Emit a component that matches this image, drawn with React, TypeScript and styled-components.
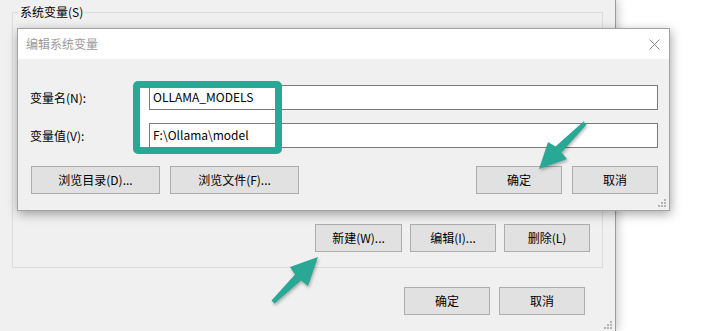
import styled, { createGlobalStyle } from 'styled-components';

const GlobalStyle = createGlobalStyle`
    html, body {
        margin: 0;
        padding: 0;
        background: #ffffff;
    }
    body {
        font-family: "Noto Sans CJK SC", "Noto Sans", sans-serif;
        font-size: 12px;
        color: #000;
    }
`;

const Desktop = styled.div`
    position: relative;
    display: flex;
    width: 703px;
    height: 331px;
    overflow: hidden;
    background: #ffffff;
`;

const MainWindow = styled.div`
    position: relative;
    box-sizing: border-box;
    display: flex;
    flex-direction: column;
    width: 616px;
    height: 331px;
    padding: 4px 30px 0 0;
    background: #f0f0f0;
    border-right: 1px solid #9c9c9c;
    box-shadow: 2px 0 9px rgba(0, 0, 0, 0.22);
`;

const GroupBox = styled.fieldset`
    box-sizing: border-box;
    width: 591px;
    height: 264px;
    margin: 0 0 0 12px;
    padding: 0 12px 15px 12px;
    border: 1px solid #dcdcdc;
    min-width: 0;
`;

const Legend = styled.legend`
    margin-left: -6px;
    padding: 0 1px;
    line-height: 16px;
    color: #000;
`;

// the variable list sits here, hidden under the dialog
const ListPane = styled.div`
    height: 204px;
`;

const ButtonRow = styled.div<{ $gap: number; $top?: number }>`
    display: flex;
    justify-content: flex-end;
    gap: ${p => p.$gap}px;
    margin-top: ${p => p.$top ?? 0}px;
`;

const Button = styled.button<{ $w: number; $h?: number }>`
    box-sizing: border-box;
    width: ${p => p.$w}px;
    height: ${p => p.$h ?? 28}px;
    padding: 0;
    background: #e1e1e1;
    border: 1px solid #adadad;
    border-radius: 0;
    font-family: "Noto Sans CJK SC", "Noto Sans", sans-serif;
    font-size: 12px;
    line-height: 16px;
    color: #000;
`;

const Dialog = styled.div`
    position: absolute;
    left: 17px;
    top: 28px;
    box-sizing: border-box;
    display: flex;
    flex-direction: column;
    width: 653px;
    height: 183px;
    background: #f0f0f0;
    border: 1px solid #a3a3a3;
    box-shadow: 1px 3px 10px rgba(0, 0, 0, 0.35);
`;

const TitleBar = styled.div`
    display: flex;
    align-items: center;
    justify-content: space-between;
    height: 30px;
    padding-left: 8px;
    background: #ffffff;
`;

const Title = styled.span`
    color: #9a9a9a;
    line-height: 16px;
`;

const Close = styled.span`
    display: flex;
    align-items: center;
    justify-content: center;
    width: 30px;
    height: 30px;
`;

const DialogBody = styled.div`
    position: relative;
    display: flex;
    flex-direction: column;
    gap: 13px;
    padding: 26px 11px 0 12px;
`;

const FieldRow = styled.div`
    display: flex;
    align-items: center;
`;

const Label = styled.span`
    width: 119px;
    line-height: 16px;
`;

const Input = styled.div`
    position: relative;
    z-index: 1;
    box-sizing: border-box;
    flex: 1;
    height: 25px;
    padding: 0 3px;
    background: #ffffff;
    border: 1px solid #7a7a7a;
    line-height: 22px;
    font-size: 12px;
`;

const ActionBar = styled.div`
    display: flex;
    gap: 10px;
    margin: 5px 0 0 1px;
`;

const Spacer = styled.div`
    flex: 1;
`;

const HighlightBack = styled.div`
    position: absolute;
    left: 122px;
    top: 29px;
    width: 135px;
    height: 59px;
    background: #ffffff;
`;

const HighlightRing = styled.div`
    position: absolute;
    z-index: 2;
    left: 115px;
    top: 22px;
    box-sizing: border-box;
    width: 149px;
    height: 73px;
    border: 7px solid #2aa896;
    border-radius: 5px;
`;

const Grip = styled.svg<{ $r: number; $b: number }>`
    position: absolute;
    right: ${p => p.$r}px;
    bottom: ${p => p.$b}px;
`;

const Arrows = styled.svg`
    position: absolute;
    left: 0;
    top: 0;
    z-index: 5;
    pointer-events: none;
    filter: drop-shadow(1px 2px 1.5px rgba(0, 0, 0, 0.28));
`;

function ResizeGrip({ r, b }: { r: number; b: number }) {
    return (
        <Grip $r={r} $b={b} width="8" height="8" viewBox="0 0 8 8">
            <g fill="#b4b4b4">
                <rect x="6" y="0" width="2" height="2" />
                <rect x="3" y="3" width="2" height="2" />
                <rect x="6" y="3" width="2" height="2" />
                <rect x="0" y="6" width="2" height="2" />
                <rect x="3" y="6" width="2" height="2" />
                <rect x="6" y="6" width="2" height="2" />
            </g>
        </Grip>
    );
}

function App() {
    return (
        <>
            <GlobalStyle />
            <Desktop>
                <MainWindow>
                    <GroupBox>
                        <Legend>系统变量(S)</Legend>
                        <ListPane />
                        <ButtonRow $gap={8}>
                            <Button $w={87}>新建(W)...</Button>
                            <Button $w={86}>编辑(I)...</Button>
                            <Button $w={86}>删除(L)</Button>
                        </ButtonRow>
                    </GroupBox>
                    <ButtonRow $gap={9} $top={19}>
                        <Button $w={86}>确定</Button>
                        <Button $w={86}>取消</Button>
                    </ButtonRow>
                    <ResizeGrip r={3} b={2} />
                </MainWindow>

                <Dialog>
                    <TitleBar>
                        <Title>编辑系统变量</Title>
                        <Close>
                            <svg width="11" height="11" viewBox="0 0 11 11">
                                <path d="M0.5 0.5 L10.5 10.5 M10.5 0.5 L0.5 10.5" stroke="#8a8a8a" strokeWidth="1" fill="none" />
                            </svg>
                        </Close>
                    </TitleBar>
                    <DialogBody>
                        <HighlightBack />
                        <FieldRow>
                            <Label>变量名(N):</Label>
                            <Input>OLLAMA_MODELS</Input>
                        </FieldRow>
                        <FieldRow>
                            <Label>变量值(V):</Label>
                            <Input>F:\Ollama\model</Input>
                        </FieldRow>
                        <ActionBar>
                            <Button $w={129} $h={28}>浏览目录(D)...</Button>
                            <Button $w={129} $h={28}>浏览文件(F)...</Button>
                            <Spacer />
                            <Button $w={86} $h={28}>确定</Button>
                            <Button $w={86} $h={28}>取消</Button>
                        </ActionBar>
                        <HighlightRing />
                    </DialogBody>
                    <ResizeGrip r={3} b={3} />
                </Dialog>

                <Arrows width="703" height="331" viewBox="0 0 703 331">
                    <polygon
                        fill="#2aa896"
                        points="583.5,121.5 555.5,146.5 548,142 539,169 567,159 561.5,152.5 586.5,124.5"
                    />
                    <polygon
                        fill="#2aa896"
                        points="271.5,300.5 295,274.5 290,267 318,257 308,286 301,280.5 274.5,303.5"
                    />
                </Arrows>
            </Desktop>
        </>
    );
}

export default App;
